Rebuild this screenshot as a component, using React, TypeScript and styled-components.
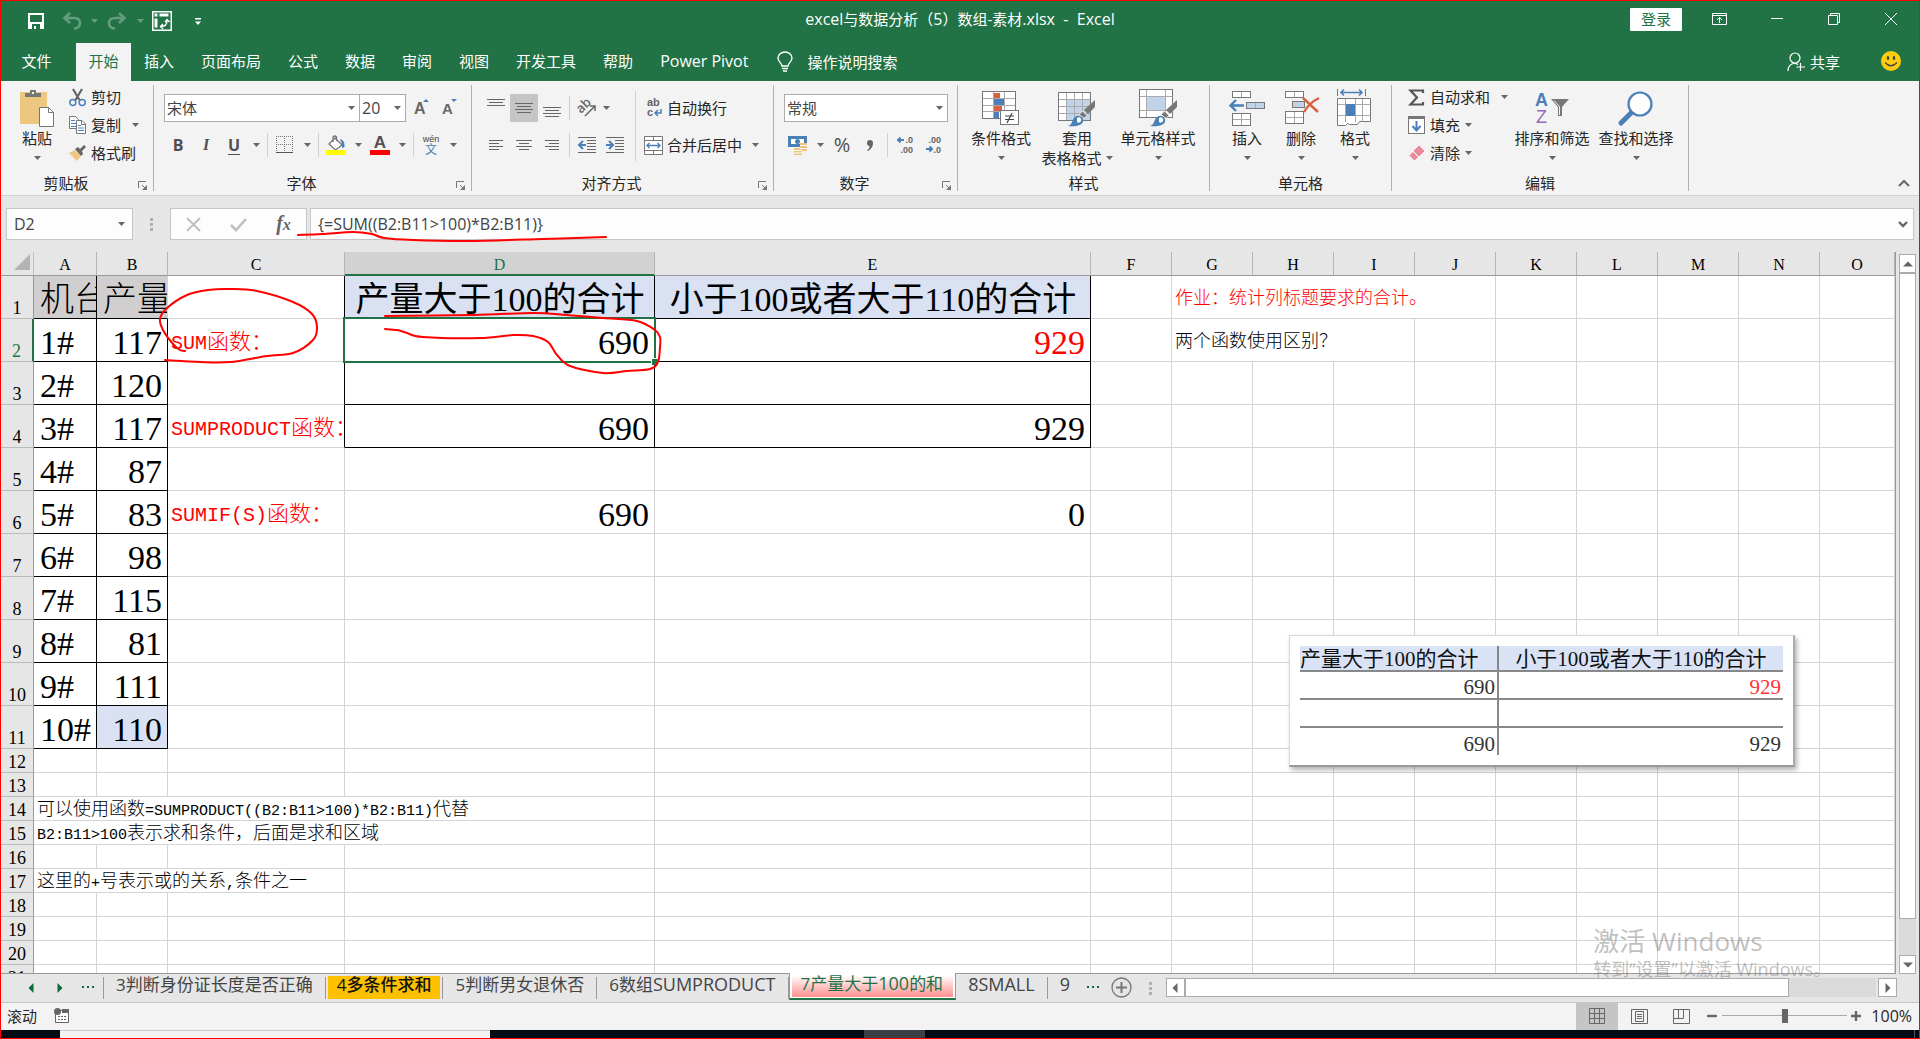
import React from "react";
import styled, { createGlobalStyle, css } from "styled-components";

const GREEN = "#217346";
const UI = `"Open Sans", "Noto Sans CJK SC", sans-serif`;
const SONG = `"Liberation Serif", "Noto Sans CJK SC", serif`;
const GREY = "#666";
const BLUE = "#4a7fb8";

const Global = createGlobalStyle`
  *, *::before, *::after { box-sizing: border-box; }
  body { margin: 0; overflow: hidden; }
  button, input, select { font: inherit; color: inherit; margin: 0; padding: 0; border: 0; background: none; border-radius: 0; }
  button { white-space: nowrap; }
  svg { display: block; flex: none; overflow: visible; }
`;

const Window = styled.div`
  position: relative;
  display: flex;
  flex-direction: column;
  height: 100vh;
  border: 1px solid #f00;
  background: #e6e6e6;
  color: #262626;
  font: 15px/20px ${UI};
  overflow: hidden;
`;

/* ---------- title bar ---------- */
const TitleBar = styled.header`
  display: grid;
  grid-template-columns: 1fr auto 1fr;
  align-items: center;
  height: 42px;
  padding-bottom: 6px;
  background: ${GREEN};
  color: #fff;
`;
const Title = styled.h1`
  margin: 0;
  font-size: 15px;
  font-weight: 400;
  white-space: pre;
`;
/* Latin letters are set one pixel larger than the Chinese around them. */
const Latin = styled.span<{ $s?: number }>`
  font-size: ${(p) => p.$s ?? 16}px;
  line-height: 0;
`;
const QuickBar = styled.div`
  display: flex;
  align-items: center;
  padding: 4px 0 0 21px;
`;
const QuickButton = styled.button<{ $w: number; $dim?: boolean }>`
  display: flex;
  align-items: center;
  justify-content: center;
  width: ${(p) => p.$w}px;
  height: 28px;
  opacity: ${(p) => (p.$dim ? 0.3 : 1)};
`;
const WindowButtons = styled.div`
  display: flex;
  justify-content: flex-end;
  align-items: center;
`;
const SignIn = styled.button`
  width: 52px;
  height: 23px;
  margin-right: 9px;
  border-radius: 1px;
  background: #fff;
  color: ${GREEN};
`;
const WindowButton = styled.button`
  display: flex;
  align-items: center;
  justify-content: center;
  width: 57px;
  height: 36px;
`;

/* ---------- ribbon tabs ---------- */
const Tabs = styled.nav`
  display: flex;
  height: 38px;
  background: ${GREEN};
  color: #fff;
`;
const Tab = styled.button<{ $active?: boolean; $file?: boolean }>`
  padding: 0 14px 3px 13px;
  width: ${(p) => (p.$file ? "75px" : p.$active ? "55px" : "auto")};
  padding-right: ${(p) => (p.$file ? "18px" : p.$active ? "12px" : "14px")};
  padding-left: ${(p) => (p.$file ? "14px" : p.$active ? "12px" : "13px")};
  background: ${(p) => (p.$active ? "#f3f3f3" : "transparent")};
  color: ${(p) => (p.$active ? GREEN : "#fff")};
`;
const TellMe = styled.button`
  display: flex;
  align-items: center;
  gap: 14px;
  padding-left: 15px;
`;
const Share = styled.button`
  display: flex;
  align-items: center;
  gap: 4px;
  margin-left: auto;
`;
const Smile = styled.button`
  display: flex;
  align-items: center;
  padding: 0 18px 2px 41px;
`;

/* ---------- ribbon ---------- */
const Ribbon = styled.section`
  display: flex;
  height: 115px;
  padding: 4px 0;
  background: #f3f3f3;
  border-bottom: 1px solid #d2d2d2;
`;
const Group = styled.section<{ $w: number }>`
  display: flex;
  flex-direction: column;
  flex: 0 0 ${(p) => p.$w}px;
  height: 106px;
  border-right: 1px solid #b1b1b1;
`;
const GroupBody = styled.div<{ $pad?: number }>`
  display: flex;
  flex: 1;
  padding-left: ${(p) => p.$pad ?? 10}px;
`;
const GroupFooter = styled.footer`
  display: flex;
  height: 16px;
  line-height: 16px;
`;
const GroupName = styled.span`
  flex: 1;
  text-align: center;
`;
const Launcher = styled.button`
  display: flex;
  align-items: center;
  width: 22px;
  padding: 5px 0 0 7px;
`;
const BigButton = styled.button<{ $w: number }>`
  display: flex;
  flex-direction: column;
  align-items: center;
  width: ${(p) => p.$w}px;
  padding-top: 3px;
`;
const BigIcon = styled.span`
  display: flex;
  align-items: center;
  height: 40px;
`;
const BigLine = styled.span`
  display: flex;
  align-items: center;
  gap: 4px;
  height: 20px;
`;
const SmallColumn = styled.div<{ $w?: number }>`
  display: flex;
  flex-direction: column;
  width: ${(p) => (p.$w ? `${p.$w}px` : "auto")};
  margin-top: -2px;
  padding-left: 6px;
`;
const SmallButton = styled.button<{ $gap?: number }>`
  display: flex;
  align-items: center;
  gap: 5px;
  height: 28px;
  svg:last-child:not(:first-child) { margin-left: ${(p) => p.$gap ?? 0}px; }
`;
const ToolRows = styled.div`
  display: flex;
  flex: 1;
  flex-direction: column;
  gap: 9px;
  padding-top: 9px;
`;
const ToolRow = styled.div`
  display: flex;
  align-items: center;
  height: 28px;
`;
const Tool = styled.button<{ $w?: number; $on?: boolean }>`
  display: flex;
  align-items: center;
  justify-content: center;
  width: ${(p) => p.$w ?? 28}px;
  height: 28px;
  background: ${(p) => (p.$on ? "#c5c5c5" : "transparent")};
`;
const Glyph = styled.span<{ $italic?: boolean; $line?: boolean; $big?: boolean }>`
  color: #505050;
  font-size: ${(p) => (p.$big ? 20 : 16)}px;
  font-weight: ${(p) => (p.$big ? 400 : 700)};
  ${(p) => p.$italic && css`font-family: "Liberation Serif", serif; font-style: italic;`}
  border-bottom: ${(p) => (p.$line ? "1px solid #505050" : "0")};
  line-height: 18px;
`;
const Rule = styled.i<{ $tall?: boolean }>`
  width: 1px;
  height: ${(p) => (p.$tall ? 70 : 24)}px;
  margin: ${(p) => (p.$tall ? "6px 0 0" : "0 3px 0 3px")};
  background: #d0d0d0;
`;
const WideTool = styled.button`
  display: flex;
  align-items: center;
  gap: 4px;
  height: 28px;
  padding-left: 8px;
  svg:last-child:not(:first-child) { margin-left: 6px; }
`;
const AlignTools = styled(ToolRows)`
  flex: 0 0 153px;
`;
const Combo = styled.label<{ $w: number }>`
  display: grid;
  align-items: center;
  width: ${(p) => p.$w}px;
  height: 28px;
  border: 1px solid #ababab;
  background: #fff;
  color: #444;
  svg { grid-area: 1 / 1; justify-self: end; margin-right: 4px; pointer-events: none; }
  select { grid-area: 1 / 1; appearance: none; width: 100%; height: 26px; padding-left: 2px; outline: 0; }
  & + & { margin: 0 2px 0 -1px; font-size: 16px; }
`;
const Collapse = styled.button`
  align-self: flex-end;
  margin-left: auto;
  padding: 0 9px 4px;
`;

/* ---------- formula bar ---------- */
const FormulaBar = styled.div`
  display: flex;
  align-items: center;
  height: 56px;
  padding: 0 5px;
`;
const Box = styled.div<{ $w?: number }>`
  display: flex;
  align-items: center;
  flex: ${(p) => (p.$w ? `0 0 ${p.$w}px` : "1")};
  min-width: 0;
  height: 32px;
  border: 1px solid #c6c6c6;
  background: #fdfdfd;
  color: #444;
  font-size: 16px;
  input { flex: 1; width: 0; min-width: 0; height: 30px; padding-left: 7px; outline: 0; }
`;
const Grip = styled.span<{ $w: number }>`
  display: flex;
  flex-direction: column;
  align-items: center;
  justify-content: center;
  gap: 2px;
  width: ${(p) => p.$w}px;
  i { width: 3px; height: 3px; background: #b0b0b0; }
`;
const FxButton = styled.button`
  display: flex;
  align-items: center;
  justify-content: center;
  width: 45px;
  height: 30px;
`;
const Fx = styled.span`
  color: #666;
  font: italic 700 20px/24px "Liberation Serif", serif;
  small { font-size: 16px; }
`;
const BoxEnd = styled.button`
  padding: 0 7px;
`;
const FormulaEnd = styled.button`
  padding: 0 5px;
`;

/* ---------- sheet ---------- */
const Main = styled.main`
  display: flex;
  flex: 1;
  min-height: 0;
`;
const SheetView = styled.div`
  position: relative;
  flex: 1;
  min-width: 0;
  overflow: hidden;
  border-bottom: 1px solid #999;
`;
const Sheet = styled.table`
  width: 100%;
  table-layout: fixed;
  border-collapse: separate;
  border-spacing: 0;
  font-family: ${SONG};
  color: #000;
`;
const CornerCell = styled.th`
  height: 24px;
  padding: 0 3px 3px 0;
  border-right: 1px solid #c0c0c0;
  border-bottom: 1px solid #999;
  svg { margin-left: auto; }
`;
const ColumnHead = styled.th<{ $on?: boolean }>`
  height: 24px;
  padding: 3px 0 0;
  border-right: 1px solid #b4b4b4;
  border-bottom: ${(p) => (p.$on ? `2px solid ${GREEN}` : "1px solid #999")};
  background: ${(p) => (p.$on ? "#d2d2d2" : "#e6e6e6")};
  color: ${(p) => (p.$on ? GREEN : "#000")};
  font-size: 16px;
  font-weight: 400;
  line-height: 18px;
`;
const RowHead = styled.th<{ $on?: boolean; $tall?: boolean }>`
  height: ${(p) => (p.$tall ? 43 : 24)}px;
  padding: 0;
  border-right: ${(p) => (p.$on ? `2px solid ${GREEN}` : "1px solid #999")};
  border-bottom: 1px solid #bbb;
  background: #e6e6e6;
  color: ${(p) => (p.$on ? GREEN : "#000")};
  font-size: 18px;
  font-weight: 400;
  line-height: 20px;
  vertical-align: bottom;
`;
type CellProps = {
  $size?: number;
  $align?: string;
  $fill?: string;
  $red?: boolean;
  $blackRight?: boolean;
  $blackBottom?: boolean;
  $head?: boolean;
};
const cellPadding = (size = 18) => (size === 34 ? "6px 5px 0 6px" : size === 22 ? "5px 3px 0" : "1px 3px 0");
const Cell = styled.td<CellProps>`
  position: relative;
  padding: ${(p) => cellPadding(p.$size)};
  border-right: 1px solid ${(p) => (p.$blackRight ? "#000" : "#d4d4d4")};
  border-bottom: 1px solid ${(p) => (p.$blackBottom ? "#000" : "#d4d4d4")};
  background: ${(p) => p.$fill ?? "#fff"};
  color: ${(p) => (p.$red ? "#f00" : "#000")};
  font-size: ${(p) => p.$size ?? 18}px;
  font-weight: ${(p) => (p.$head ? 400 : 300)};
  line-height: 22px;
  text-align: ${(p) => p.$align ?? "left"};
  white-space: nowrap;
  overflow: clip;
`;
const SelectedCell = styled(Cell)`
  overflow: visible;
`;
const Half = styled.span<{ $s: number }>`
  font-family: "Liberation Mono", monospace;
  font-size: ${(p) => p.$s}px;
  line-height: 1;
`;
const Selection = styled.i`
  position: absolute;
  inset: -2px;
  z-index: 1;
  border: 2px solid ${GREEN};
  &::after {
    content: "";
    position: absolute;
    right: -4px;
    bottom: -4px;
    width: 7px;
    height: 7px;
    border: solid #fff;
    border-width: 1px 0 0 1px;
    background: ${GREEN};
  }
`;
const Picture = styled.figure`
  position: absolute;
  left: 1288px;
  top: 383px;
  width: 506px;
  margin: 0;
  padding: 10px;
  border: 1px solid #d8d8d8;
  border-right: 2px solid #aaa;
  border-bottom: 2px solid #999;
  background: #fff;
  box-shadow: 2px 3px 5px rgba(0, 0, 0, 0.3);
`;
const PictureTable = styled.table`
  width: 100%;
  table-layout: fixed;
  border-collapse: collapse;
  color: #333;
  font: 21px/22px ${SONG};
  th { height: 25px; padding: 1px 0 0; background: #dae3f5; color: #111; font-weight: 400; white-space: nowrap; }
  th:first-child { text-align: left; }
  td { height: 28px; padding: 4px 2px 0; text-align: right; }
  th, tr:not(:last-child) td { border-bottom: 2px solid #888; }
  tr > :first-child { border-right: 2px solid #888; }
  .warn { color: #f33; }
`;
const VScroll = styled.div`
  display: flex;
  flex-direction: column;
  width: 24px;
  padding: 2px 3px 0 3px;
  border-left: 1px solid #999;
`;
const ScrollButton = styled.button`
  display: flex;
  align-items: center;
  justify-content: center;
  flex: 0 0 19px;
  height: 19px;
  border: 1px solid #ababab;
  background: #fff;
`;
const VTrack = styled.div`
  flex: 1;
  padding-bottom: 36px;
  background: #dadada;
`;
const Thumb = styled.div`
  height: 100%;
  border: 1px solid #ababab;
  background: #fff;
`;

/* ---------- sheet tabs ---------- */
const SheetBar = styled.div`
  display: flex;
  height: 29px;
  padding-left: 15px;
  border-bottom: 1px solid #c6c6c6;
`;
const TabArrow = styled.button<{ $w: number }>`
  display: flex;
  align-items: center;
  justify-content: center;
  width: ${(p) => p.$w}px;
  height: 27px;
`;
const SheetTab = styled.button<{ $first?: boolean; $last?: boolean }>`
  height: 22px;
  margin-top: 3px;
  padding: 0 ${(p) => (p.$last ? 10 : 12)}px 6px 12px;
  border-right: ${(p) => (p.$last ? "0" : "1px solid #999")};
  border-left: ${(p) => (p.$first ? "1px solid #999" : "0")};
  color: #444;
  font-size: 17px;
  line-height: 16px;
`;
const OrangeTab = styled.button`
  height: 23px;
  margin: 2px 2px 0;
  padding: 0 9px 6px;
  background: #ffc000;
  color: #111;
  font-size: 17px;
  font-weight: 500;
  line-height: 16px;
`;
const TabRule = styled.i`
  width: 1px;
  height: 22px;
  margin-top: 3px;
  background: #999;
`;
const ActiveTab = styled.button`
  position: relative;
  z-index: 1;
  height: 27px;
  margin-top: -1px;
  padding: 0 2px 1px;
  border: solid #999;
  border-width: 0 1px;
  border-bottom: 2px solid ${GREEN};
  background: #fff;
  color: ${GREEN};
  font-size: 17px;
  line-height: 16px;
`;
const ActiveFill = styled.span`
  display: block;
  height: 24px;
  padding: 3px 10px 3px 9px;
  background: linear-gradient(#fff 10%, #ff8f8f);
`;
const HScroll = styled.div`
  display: flex;
  flex: 1;
  height: 19px;
  margin: 4px 22px 0 0;
`;
const HTrack = styled.div`
  flex: 1;
  margin-right: 2px;
  padding-right: 87px;
  background: #dadada;
`;

/* ---------- status bar ---------- */
const StatusBar = styled.footer`
  display: flex;
  align-items: center;
  height: 27px;
  padding: 0 7px 2px 6px;
  background: #f3f3f3;
`;
const ViewButtons = styled.div`
  display: flex;
  height: 25px;
  margin: 0 4px 0 auto;
`;
const ViewButton = styled.button<{ $on?: boolean }>`
  display: flex;
  align-items: center;
  justify-content: center;
  width: 42px;
  height: 27px;
  background: ${(p) => (p.$on ? "#c5c5c5" : "transparent")};
`;
const ZoomSlider = styled.input`
  appearance: none;
  width: 125px;
  height: 14px;
  margin: 0 4px;
  background: linear-gradient(#aaa, #aaa) center / 100% 1px no-repeat;
  &::-webkit-slider-thumb { appearance: none; width: 6px; height: 14px; background: #666; }
`;
const Percent = styled.span`
  margin-left: 10px;
  font-size: 16px;
`;
const Taskbar = styled.div`
  display: flex;
  height: 8px;
  background: #050b13;
  i { height: 8px; }
  i:nth-child(1) { width: 59px; }
  i:nth-child(2) { width: 430px; background: #f3f3f3; border-top: 1px solid #ccc; }
  i:nth-child(3) { width: 374px; }
  i:nth-child(4) { width: 61px; background: #3a3f46; }
  i:nth-child(5) { width: 1px; margin: 0 4px 0 auto; background: #555; }
`;
const Watermark = styled.aside`
  position: absolute;
  right: 88px;
  bottom: 58px;
  color: rgba(130, 130, 130, 0.5);
  font-size: 18px;
  line-height: 22px;
  white-space: nowrap;
  pointer-events: none;
  strong { display: block; font-size: 26px; font-weight: 400; line-height: 34px; }
`;
const Ink = styled.svg`
  position: absolute;
  left: -1px;
  top: -1px;
  z-index: 2;
  pointer-events: none;
`;

/* ---------- small icons ---------- */
const Caret = ({ fill = GREY }: { fill?: string }) => (
  <svg width="7" height="4" viewBox="0 0 7 4"><path d="M0 0h7L3.5 4z" fill={fill} /></svg>
);
const Lines = ({ rows, y }: { rows: [number, number][]; y: number }) => (
  <svg width="20" height="20" viewBox="0 0 20 20">
    {rows.map(([x, w], i) => <rect key={i} x={x} y={y + i * 3} width={w} height="1" fill={GREY} />)}
  </svg>
);
const wide: [number, number][] = [[1, 18], [3, 14], [1, 18], [3, 14]];
const UndoIcon = () => (
  <svg width="20" height="18" viewBox="0 0 20 18" fill="none" stroke="#fff" strokeWidth="2.6">
    <path d="M8 1L2.5 6 8 11M3 6h9c4 0 6 2 6 5s-2 5.500-6 5.500" />
  </svg>
);
const Grid = ({ x, y, w, h, nx, ny }: { x: number; y: number; w: number; h: number; nx: number; ny: number }) => (
  <g>
    <g stroke="#aaa" strokeWidth="1">
      {Array.from({ length: nx - 1 }, (_, i) => <path key={`v${i}`} d={`M${x + Math.round((w / nx) * (i + 1))} ${y}v${h}`} />)}
      {Array.from({ length: ny - 1 }, (_, i) => <path key={`h${i}`} d={`M${x} ${y + Math.round((h / ny) * (i + 1))}h${w}`} />)}
    </g>
    <rect x={x} y={y} width={w} height={h} fill="none" stroke="#777" />
  </g>
);
const Brush = ({ x, y }: { x: number; y: number }) => (
  <g transform={`translate(${x} ${y})`}>
    <path d="M27 0v7l-7 7-4-4z" fill="#777" />
    <path d="M14.500 11l4.500 4.500-3 3-5-4z" fill="#777" stroke="#f3f3f3" />
    <path d="M0 26c5-1 4-9 9-10 4-1 7 3 6 6-2 4-9 5-15 4z" fill={BLUE} />
    <path d="M9 18c2-2 5 0 4 3-1 2-3 2-4 1z" fill="#fff" />
  </g>
);
const PasteIcon = () => (
  <svg width="36" height="38" viewBox="0 0 36 38">
    <rect x="1" y="3" width="27" height="32" fill="#edc77f" />
    <path d="M6 8V4h5V1h6v3h5v4z" fill="#777" /><rect x="13" y="3" width="2" height="2" fill="#f3f3f3" />
    <path d="M20.500 18.500h9l5 5v14h-14z" fill="#fff" stroke="#777" /><path d="M29.500 18.500v5h5" fill="none" stroke="#777" />
  </svg>
);
const CutIcon = () => (
  <svg width="17" height="19" viewBox="0 0 17 19" fill="none">
    <path d="M4 1l6.500 11M13 1L6.500 12" stroke="#666" strokeWidth="2.200" />
    <circle cx="3.800" cy="14.500" r="3" stroke={BLUE} strokeWidth="1.500" /><circle cx="13.200" cy="14.500" r="3" stroke={BLUE} strokeWidth="1.500" />
  </svg>
);
const CopyIcon = () => (
  <svg width="17" height="18" viewBox="0 0 17 18">
    <path d="M.5.500h6l3 3v9h-9z" fill="#fff" stroke="#777" /><path d="M2 4.500h4M2 7.500h5M2 10.500h5" stroke={BLUE} />
    <path d="M7.500 4.500h5.500l3.500 3.500v9.500h-9z" fill="#fff" stroke="#777" /><path d="M12.500 4.500v4h4" fill="none" stroke="#777" /><path d="M9 9.500h3M9 12h6M9 14.500h6" stroke={BLUE} />
  </svg>
);
const PainterIcon = () => (
  <svg width="17" height="16" viewBox="0 0 17 16">
    <path d="M0 8l6-3 6 6-4 5z" fill="#edc77f" /><path d="M6 4l3-2 2 2 4-4 2 2-4 4 1 3-2 2z" fill="#666" />
  </svg>
);
const BordersIcon = () => (
  <svg width="18" height="18" viewBox="0 0 18 18" fill="none" stroke="#777">
    <path d="M.5 0v16M8.500 0v16M16.500 0v16M0 .5h17M0 8.500h17" strokeDasharray="1 1" /><path d="M0 16.500h17" stroke="#555" />
  </svg>
);
const FillIcon = () => (
  <svg width="20" height="20" viewBox="0 0 20 20">
    <path d="M9 3l7 7-6.500 5L3 9z" fill="#fff" stroke="#777" strokeWidth="1.300" /><path d="M7 7V2q2-2 3.500 0v4" fill="none" stroke="#777" strokeWidth="1.300" />
    <path d="M14 4q5 1 4.500 8l-2.500 1V9z" fill={BLUE} /><rect y="15" width="20" height="5" fill="#ff0" />
  </svg>
);
const svgFont = { fontFamily: `"Open Sans", "Noto Sans CJK SC", sans-serif` };
const tightFont = { fontFamily: `"Liberation Sans", sans-serif` };
const FontColorIcon = () => (
  <svg width="20" height="20" viewBox="0 0 20 20">
    <text x="10" y="13" textAnchor="middle" fontSize="17" fontWeight="700" fill="#505050" style={tightFont}>A</text>
    <rect y="15" width="20" height="5" fill="#f00" />
  </svg>
);
const PhoneticIcon = () => (
  <svg width="18" height="20" viewBox="0 0 18 20">
    <text x="9" y="7" textAnchor="middle" fontSize="9" fill="#444" style={tightFont}>wén</text>
    <text x="9" y="19" textAnchor="middle" fontSize="12" fill={BLUE} style={svgFont}>文</text>
  </svg>
);
const SizeIcon = ({ up }: { up?: boolean }) => (
  <svg width="18" height="20" viewBox="0 0 18 20" style={tightFont}>
    <text x="1" y="16" fontSize={up ? 16 : 15} fontWeight="600" fill="#666">A</text>
    <path d={up ? "M10 4h6l-3-3z" : "M10 1h6l-3 3z"} fill={BLUE} />
  </svg>
);
const AngleIcon = () => (
  <svg width="20" height="20" viewBox="0 0 20 20" style={svgFont}>
    <text x="0" y="0" transform="translate(4 16) rotate(-45)" fontSize="13" fontWeight="600" fill="#666">ab</text>
    <path d="M8 18L18 8M13 8h5v5" fill="none" stroke="#666" strokeWidth="1.500" />
  </svg>
);
const IndentIcon = ({ out }: { out?: boolean }) => (
  <svg width="20" height="18" viewBox="0 0 20 18">
    <path d="M1 1.500h18M10 4.500h9M10 7.500h9M10 10.500h9M10 13.500h9M1 16.500h18" stroke={GREY} />
    <path d={out ? "M9 9H3M6 5L2 9l4 4" : "M1 9h6M4 5l4 4-4 4"} fill="none" stroke={BLUE} strokeWidth="2" />
  </svg>
);
const WrapIcon = () => (
  <svg width="19" height="20" viewBox="0 0 19 20" style={tightFont}>
    <text x="3" y="8" fontSize="11" fontWeight="700" fill="#666">ab</text>
    <text x="3" y="18" fontSize="11" fontWeight="700" fill="#666">c</text>
    <path d="M17 11v4h-6M14 12l-3 3 3 3" fill="none" stroke={BLUE} strokeWidth="1.500" />
  </svg>
);
const MergeIcon = () => (
  <svg width="19" height="19" viewBox="0 0 19 19" fill="none">
    <path d="M.5.500h18v18H.5zM.5 4.500h18M.5 14.500h18M9.500.500v4M9.500 14.500v4" fill="#fff" stroke="#777" />
    <path d="M3 9.500h13M5.500 7L3 9.500 5.500 12M13.500 7L16 9.500 13.500 12" stroke={BLUE} strokeWidth="1.400" />
  </svg>
);
const MoneyIcon = () => (
  <svg width="20" height="20" viewBox="0 0 20 20">
    <rect x="1.500" y="2.500" width="16" height="8" fill="#fff" stroke={BLUE} strokeWidth="3" /><circle cx="9.500" cy="6.500" r="2.500" fill={BLUE} />
    <path d="M12 8h7v8h-7zM6 13h8v7H6z" fill="#edc27d" /><path d="M12 10.500h7M12 13.500h7M6 15.500h8M6 18h8" stroke="#fff" />
  </svg>
);
const DecimalIcon = ({ more }: { more?: boolean }) => (
  <svg width="20" height="20" viewBox="0 0 20 20" style={tightFont}>
    <text x="18" y="8" textAnchor="end" fontSize="9" fontWeight="700" fill="#666">{more ? ".0" : ".00"}</text>
    <text x="18" y="18" textAnchor="end" fontSize="9" fontWeight="700" fill="#666">{more ? ".00" : ".0"}</text>
    <path d={more ? "M9 5H3M5.500 2.500L3 5l2.500 2.500" : "M3 14h6M6.500 11.500L9 14l-2.500 2.500"} fill="none" stroke={BLUE} strokeWidth="2" />
  </svg>
);
const ConditionalIcon = () => (
  <svg width="38" height="36" viewBox="0 0 38 36">
    <rect x="1" y="2" width="33" height="27" fill="#fff" />
    <path d="M11 3h7v6h-7zM11 16h9v6h-9z" fill="#d9603f" /><path d="M11 9h11v7H11zM11 22h6v7h-6z" fill={BLUE} />
    <Grid x={0.5} y={1.5} w={33} h={27} nx={3} ny={4} />
    <rect x="18.500" y="20.500" width="18" height="14" fill="#fff" stroke="#777" />
    <path d="M23 26h9M23 29.500h9M30 23l-5 10" stroke="#444" strokeWidth="1.200" />
  </svg>
);
const TableStyleIcon = () => (
  <svg width="38" height="38" viewBox="0 0 38 38">
    <rect x="1" y="4" width="32" height="27" fill="#fff" /><rect x="9" y="11" width="24" height="20" fill="#c0d3e8" />
    <Grid x={0.5} y={3.5} w={32} h={28} nx={4} ny={4} /><Brush x={10} y={11} />
  </svg>
);
const CellStyleIcon = () => (
  <svg width="38" height="38" viewBox="0 0 38 38">
    <rect x=".5" y=".5" width="33" height="28" fill="#fff" stroke="#777" />
    <path d="M7.500 1v27M26.500 1v27M1 7.500h32M1 21.500h32" stroke="#aaa" /><rect x="8" y="8" width="18" height="13" fill="#c0d3e8" />
    <Brush x={11} y={11} />
  </svg>
);
const SmallGrid = ({ y, h, ny }: { y: number; h: number; ny: number }) => (
  <g><rect x="3.500" y={y} width="18" height={h} fill="#fff" /><Grid x={3.5} y={y} w={18} h={h} nx={2} ny={ny} /></g>
);
const InsertIcon = () => (
  <svg width="36" height="36" viewBox="0 0 36 36">
    <SmallGrid y={1.5} h={6} ny={1} /><SmallGrid y={23.5} h={12} ny={2} />
    <rect x="17.500" y="12.500" width="18" height="6" fill="#c0d3e8" /><Grid x={17.5} y={12.5} w={18} h={6} nx={2} ny={1} />
    <path d="M15 15.500H2M7 10l-5.500 5.500L7 21" fill="none" stroke={BLUE} strokeWidth="2.400" />
  </svg>
);
const DeleteIcon = () => (
  <svg width="38" height="36" viewBox="0 0 38 36">
    <SmallGrid y={1.5} h={6} ny={1} /><SmallGrid y={21.5} h={12} ny={2} />
    <rect x="10.500" y="11.500" width="12" height="6" fill="#c0d3e8" stroke="#777" />
    <path d="M21 8l15 14M37 8Q27 13 22 22" fill="none" stroke="#d9603f" strokeWidth="2.400" />
  </svg>
);
const FormatIcon = () => (
  <svg width="36" height="38" viewBox="0 0 36 38">
    <path d="M.5 0v7M28.500 0v7" stroke={BLUE} /><path d="M4 3.500h21M7 .5l-3 3 3 3M22 .5l3 3-3 3" fill="none" stroke={BLUE} strokeWidth="1.600" />
    <path d="M.5 9.500h33v23h-11l-2 3h-8l-2-1-2 2h-8z" fill="#fff" stroke="#777" />
    <path d="M8.500 10v23M18.500 10v23M25.500 10v23M1 15.500h32M1 26.500h32" stroke="#aaa" /><rect x="9" y="15" width="9" height="12" fill={BLUE} />
  </svg>
);
const SumIcon = () => (
  <svg width="17" height="17" viewBox="0 0 17 17"><path d="M15 4V1.500H2.500L9 8.500l-6.500 7H15V13" fill="none" stroke="#555" strokeWidth="2.200" /></svg>
);
const FillDownIcon = () => (
  <svg width="17" height="18" viewBox="0 0 17 18">
    <rect x=".5" y=".5" width="16" height="17" fill="#fff" stroke="#777" /><rect width="17" height="3" fill="#777" />
    <path d="M8.500 5v9M4.500 10l4 4.500 4-4.500" fill="none" stroke={BLUE} strokeWidth="2" />
  </svg>
);
const EraserIcon = () => (
  <svg width="17" height="17" viewBox="0 0 17 17"><path d="M11 1l5 5-5 5-5-5z" fill="#e8899c" stroke="#e8899c" strokeLinejoin="round" /><path d="M5 7l5 5-3.500 3.500-5-5z" fill="#e8899c" /></svg>
);
const SortIcon = () => (
  <svg width="36" height="36" viewBox="0 0 36 36" style={tightFont}>
    <text x="1" y="16" fontSize="18" fontWeight="700" fill={BLUE}>A</text><text x="2" y="33" fontSize="18" fontWeight="400" fill="#9668b8">Z</text>
    <path d="M17 9h18l-7 8v9h-4v-9z" fill="#777" /><path d="M20 10.500l5.500 6V25" fill="none" stroke="#f3f3f3" />
  </svg>
);
const FindIcon = () => (
  <svg width="36" height="36" viewBox="0 0 36 36">
    <path d="M14 22L3 33" stroke={BLUE} strokeWidth="5" strokeLinecap="round" /><circle cx="22" cy="14" r="11.500" fill="#fff" stroke={BLUE} strokeWidth="2.200" />
  </svg>
);
const Arrow = ({ d, fill = GREY }: { d: string; fill?: string }) => <svg width="10" height="10" viewBox="0 0 10 10"><path d={d} fill={fill} /></svg>;
const Ellipsis = () => (
  <svg width="13" height="3" viewBox="0 0 13 3"><path d="M0 0h2v2H0zM5 0h2v2H5zM10 0h2v2h-2z" fill="#0b6b3a" /></svg>
);
const LEFT = "M7.500 0v10l-5-5z";
const RIGHT = "M2.500 0v10l5-5z";

const Big = ({ w, icon, label, second }: { w: number; icon: React.ReactNode; label: string; second?: string }) => (
  <BigButton $w={w}>
    <BigIcon>{icon}</BigIcon>
    <BigLine>{label}</BigLine>
    <BigLine>{second}<Caret /></BigLine>
  </BigButton>
);
const RibbonGroup = ({ w, pad, name, launcher, children }: { w: number; pad?: number; name: string; launcher?: boolean; children: React.ReactNode }) => (
  <Group $w={w}>
    <GroupBody $pad={pad}>{children}</GroupBody>
    <GroupFooter>
      <GroupName>{name}</GroupName>
      {launcher && (
        <Launcher aria-label={`${name}设置`}>
          <svg width="10" height="10" viewBox="0 0 10 10"><path d="M.5 7V.5H8M4 4l4 4" fill="none" stroke="#777" /><path d="M9 4v5H4z" fill="#777" /></svg>
        </Launcher>
      )}
    </GroupFooter>
  </Group>
);
const Dropdown = ({ w, label, value }: { w: number; label: string; value: string }) => (
  <Combo $w={w}><select aria-label={label} defaultValue={value}><option>{value}</option></select><Caret /></Combo>
);

/* ---------- sheet contents ---------- */
const letters = ["A", "B", "C", "D", "E", "F", "G", "H", "I", "J", "K", "L", "M", "N", "O"];
const widths = [63, 71, 177, 310, 436, 81, 81, 81, 81, 81, 81, 81, 81, 81];
const output = ["117", "120", "117", "87", "83", "98", "115", "81", "111", "110"];
type Content = CellProps & { text: React.ReactNode; span?: number };
const red = (latin: string): Content => ({ text: <><Half $s={20}>{latin}</Half>函数：</>, $size: 22, $red: true });
const right = (text: string, isRed = false): Content => ({ text, $size: 34, $align: "right", $red: isRed });

const cells: Record<string, Content> = {
  A1: { text: "机台", $size: 34, $fill: "#d0cece" },
  B1: { text: "产量", $size: 34, $fill: "#d0cece" },
  D1: { text: "产量大于100的合计", $size: 34, $align: "center", $fill: "#d9e1f2", $head: true },
  E1: { text: "小于100或者大于110的合计", $size: 34, $align: "center", $fill: "#d9e1f2", $head: true },
  G1: { text: "作业：统计列标题要求的合计。", $red: true, span: 4 },
  G2: { text: "两个函数使用区别？", span: 3 },
  C2: red("SUM"), C4: red("SUMPRODUCT"), C6: red("SUMIF(S)"),
  D2: right("690"), E2: right("929", true), D4: right("690"), E4: right("929"), D6: right("690"), E6: right("0"),
  A14: { text: <>可以使用函数<Half $s={15}>=SUMPRODUCT((B2:B11&gt;100)*B2:B11)</Half>代替</>, span: 4 },
  A15: { text: <><Half $s={15}>B2:B11&gt;100</Half>表示求和条件，后面是求和区域</>, span: 4 },
  A17: { text: <>这里的<Half $s={15}>+</Half>号表示或的关系<Half $s={15}>,</Half>条件之一</>, span: 3 },
};
output.forEach((v, i) => {
  cells[`A${i + 2}`] = { text: `${i + 1}#`, $size: 34 };
  cells[`B${i + 2}`] = { ...right(v), $fill: i === 9 ? "#d9e1f2" : undefined };
});

const SheetRow = ({ n }: { n: number }) => {
  const items: React.ReactNode[] = [];
  for (let c = 0; c < letters.length; c++) {
    const key = `${letters[c]}${n}`;
    const { text, span = 1, ...look } = cells[key] ?? { text: null };
    const blackBottom = (c < 2 && n <= 11) || (c >= 3 && c <= 4 && n <= 4);
    const blackRight = (c === 0 && n <= 11) || (c === 1 && n > 1 && n <= 11) || (c >= 2 && c <= 4 && n <= 4);
    const Kind = key === "D2" ? SelectedCell : Cell;
    items.push(
      <Kind key={key} colSpan={span} {...look} $blackRight={blackRight} $blackBottom={blackBottom}>
        {text}{key === "D2" && <Selection />}
      </Kind>
    );
    c += span - 1;
  }
  return <tr><RowHead scope="row" $on={n === 2} $tall={n <= 11}>{n}</RowHead>{items}</tr>;
};

/* Smooth pen stroke through a list of points. */
const stroke = (pts: number[][]) =>
  pts.slice(0, -1).reduce((d, p1, i) => {
    const p0 = pts[i - 1] ?? p1, p2 = pts[i + 1], p3 = pts[i + 2] ?? p2;
    return `${d}C${p1[0] + (p2[0] - p0[0]) / 6} ${p1[1] + (p2[1] - p0[1]) / 6} ${p2[0] - (p3[0] - p1[0]) / 6} ${p2[1] - (p3[1] - p1[1]) / 6} ${p2[0]} ${p2[1]}`;
  }, `M${pts[0][0]} ${pts[0][1]}`);
const inkStrokes = [
  [[298, 235], [322, 234], [353, 232], [372, 234], [384, 238], [413, 240], [467, 241], [543, 239], [606, 237]],
  [[185, 351], [180, 350], [173, 344], [163, 330], [160, 319], [167, 308], [187, 295], [208, 290], [230, 289], [257, 291], [293, 302], [312, 314], [317, 327], [313, 340], [293, 353], [267, 356], [230, 362], [200, 362], [165, 360]],
  [[385, 316], [473, 315], [533, 313], [567, 315], [603, 318], [637, 321], [655, 330], [660, 337], [660, 347], [658, 362], [650, 369], [627, 371], [603, 373], [570, 366], [557, 355], [548, 342], [533, 336], [513, 335], [480, 338], [423, 337], [407, 333], [397, 330], [385, 329]],
];

export default function App() {
  return (
    <Window>
      <Global />
      <TitleBar>
        <QuickBar>
          <QuickButton $w={28} aria-label="保存"><svg width="16" height="16" viewBox="0 0 16 16"><path d="M0 0h16v16H0zM2 2v7h12V2zM4 11v5h2v-3h2v3h4v-5z" fill="#fff" fillRule="evenodd" /></svg></QuickButton>
          <QuickButton $w={44} $dim aria-label="撤消"><UndoIcon /></QuickButton>
          <QuickButton $w={0} $dim aria-label="撤消列表"><Caret fill="#fff" /></QuickButton>
          <QuickButton $w={46} $dim aria-label="恢复"><svg width="20" height="18" viewBox="0 0 20 18" fill="none" stroke="#fff" strokeWidth="2.600"><path d="M12 1l5.500 5-5.500 5M17 6H8c-4 0-6 2-6 5s2 5.500 6 5.500" /></svg></QuickButton>
          <QuickButton $w={0} $dim aria-label="恢复列表"><Caret fill="#fff" /></QuickButton>
          <QuickButton $w={44} aria-label="数据透视表"><svg width="20" height="20" viewBox="0 0 20 20" fill="none" stroke="#fff"><path d="M.75.750h18.500v18.500H.750z" strokeWidth="1.500" /><path d="M2.500 2.500h3v3h-3zM7.500 2.500h9v3h-9zM2.500 7.500h3v9h-3z" fill="#fff" stroke="none" /><path d="M9 15.500c4 0 6-2 6-6M13 11l2-2.500 2.500 2.500M11 13l-2.500 2.500L11 18" strokeWidth="1.400" /></svg></QuickButton>
          <QuickButton $w={28} aria-label="自定义快速访问工具栏"><svg width="6" height="7" viewBox="0 0 6 7"><path d="M0 0h6v1.500H0zM0 3.500h6L3 7z" fill="#fff" /></svg></QuickButton>
        </QuickBar>
        <Title><Latin>excel</Latin>与数据分析（<Latin>5</Latin>）数组-素材<Latin>.xlsx  -  Excel</Latin></Title>
        <WindowButtons>
          <SignIn>登录</SignIn>
          <WindowButton aria-label="功能区显示选项"><svg width="15" height="12" viewBox="0 0 15 12" fill="none" stroke="#fff"><path d="M.5.500h14v11H.5zM0 2.500h15M7.500 10V4.500M5 7l2.500-2.500L10 7" /></svg></WindowButton>
          <WindowButton aria-label="最小化"><svg width="12" height="12" viewBox="0 0 12 12"><path d="M0 5.500h12" stroke="#fff" /></svg></WindowButton>
          <WindowButton aria-label="还原"><svg width="12" height="12" viewBox="0 0 12 12" fill="none" stroke="#fff"><path d="M.5 2.500h9v9h-9zM2.500 2.500v-2h9v9h-2" /></svg></WindowButton>
          <WindowButton aria-label="关闭"><svg width="12" height="12" viewBox="0 0 12 12"><path d="M0 0l12 12M12 0L0 12" stroke="#fff" /></svg></WindowButton>
        </WindowButtons>
      </TitleBar>

      <Tabs>
        <Tab $file>文件</Tab>
        <Tab $active>开始</Tab>
        {["插入", "页面布局", "公式", "数据", "审阅", "视图", "开发工具", "帮助"].map((t) => <Tab key={t}>{t}</Tab>)}
        <Tab><Latin>Power Pivot</Latin></Tab>
        <TellMe>
          <svg width="16" height="20" viewBox="0 0 16 20" fill="none" stroke="#fff" strokeWidth="1.400"><path d="M5 14c0-3-4-4-4-8a7 6 0 0 1 14 0c0 4-4 5-4 8zM5 16.500h6M6 19h4" /></svg>
          操作说明搜索
        </TellMe>
        <Share>
          <svg width="19" height="20" viewBox="0 0 19 20" fill="none" stroke="#fff" strokeWidth="1.200"><circle cx="8" cy="6" r="5" /><path d="M1 19c0-5 3-7.500 6-7.500 2 0 3 0 4 1M13.500 11v8M9.500 15h8.500" /></svg>
          共享
        </Share>
        <Smile aria-label="反馈"><svg width="20" height="20" viewBox="0 0 20 20"><circle cx="10" cy="10" r="10" fill="#fc1" /><ellipse cx="7" cy="7" rx="1.300" ry="2" fill="#444" /><ellipse cx="13" cy="7" rx="1.300" ry="2" fill="#444" /><path d="M4 11.500q6 6.500 12 0" fill="none" stroke="#444" strokeWidth="1.300" /></svg></Smile>
      </Tabs>

      <Ribbon>
        <RibbonGroup w={153} pad={10} name="剪贴板" launcher>
          <Big w={52} icon={<PasteIcon />} label="粘贴" />
          <SmallColumn>
            <SmallButton><CutIcon />剪切</SmallButton>
            <SmallButton $gap={6}><CopyIcon />复制<Caret /></SmallButton>
            <SmallButton><PainterIcon />格式刷</SmallButton>
          </SmallColumn>
        </RibbonGroup>

        <RibbonGroup w={318} name="字体" launcher>
          <ToolRows>
            <ToolRow>
              <Dropdown w={196} label="字体" value="宋体" />
              <Dropdown w={47} label="字号" value="20" />
              <Tool aria-label="增大字号"><SizeIcon up /></Tool>
              <Tool aria-label="减小字号"><SizeIcon /></Tool>
            </ToolRow>
            <ToolRow>
              <Tool aria-label="加粗"><Glyph>B</Glyph></Tool>
              <Tool aria-label="倾斜"><Glyph $italic>I</Glyph></Tool>
              <Tool aria-label="下划线"><Glyph $line>U</Glyph></Tool>
              <Tool $w={16} aria-label="下划线样式"><Caret /></Tool>
              <Rule />
              <Tool aria-label="边框"><BordersIcon /></Tool>
              <Tool $w={16} aria-label="边框样式"><Caret /></Tool>
              <Rule />
              <Tool aria-label="填充颜色"><FillIcon /></Tool>
              <Tool $w={16} aria-label="选择填充颜色"><Caret /></Tool>
              <Tool aria-label="字体颜色"><FontColorIcon /></Tool>
              <Tool $w={16} aria-label="选择字体颜色"><Caret /></Tool>
              <Rule />
              <Tool aria-label="拼音"><PhoneticIcon /></Tool>
              <Tool $w={16} aria-label="拼音选项"><Caret /></Tool>
            </ToolRow>
          </ToolRows>
        </RibbonGroup>

        <RibbonGroup w={302} name="对齐方式" launcher>
          <AlignTools>
            <ToolRow>
              <Tool aria-label="顶端对齐"><Lines rows={wide.slice(0, 3)} y={1} /></Tool>
              <Tool $on aria-label="垂直居中"><Lines rows={wide} y={5} /></Tool>
              <Tool aria-label="底端对齐"><Lines rows={wide} y={9} /></Tool>
              <Rule />
              <Tool aria-label="方向"><AngleIcon /></Tool>
              <Tool $w={10} aria-label="方向选项"><Caret /></Tool>
            </ToolRow>
            <ToolRow>
              <Tool aria-label="左对齐"><Lines rows={[[3, 14], [3, 10], [3, 14], [3, 10]]} y={5} /></Tool>
              <Tool aria-label="居中"><Lines rows={[[2, 16], [5, 10], [2, 16], [5, 10]]} y={5} /></Tool>
              <Tool aria-label="右对齐"><Lines rows={[[3, 14], [7, 10], [3, 14], [7, 10]]} y={5} /></Tool>
              <Rule />
              <Tool aria-label="减少缩进量"><IndentIcon out /></Tool>
              <Tool aria-label="增加缩进量"><IndentIcon /></Tool>
            </ToolRow>
          </AlignTools>
          <Rule $tall />
          <ToolRows>
            <WideTool><WrapIcon />自动换行</WideTool>
            <WideTool><MergeIcon />合并后居中<Caret /></WideTool>
          </ToolRows>
        </RibbonGroup>

        <RibbonGroup w={184} name="数字" launcher>
          <ToolRows>
            <ToolRow><Dropdown w={164} label="数字格式" value="常规" /></ToolRow>
            <ToolRow>
              <Tool aria-label="会计数字格式"><MoneyIcon /></Tool>
              <Tool $w={16} aria-label="会计格式选项"><Caret /></Tool>
              <Tool aria-label="百分比样式"><Glyph $big>%</Glyph></Tool>
              <Tool aria-label="千位分隔样式"><svg width="8" height="11" viewBox="0 0 8 11"><path d="M1 3a3 3 0 0 1 6 0c0 4-2 6-5 8l-1-1c2-1 2.500-2 2.500-4C2 6 1 5 1 3z" fill="#666" /></svg></Tool>
              <Rule />
              <Tool aria-label="增加小数位数"><DecimalIcon more /></Tool>
              <Tool aria-label="减少小数位数"><DecimalIcon /></Tool>
            </ToolRow>
          </ToolRows>
        </RibbonGroup>

        <RibbonGroup w={252} pad={5} name="样式">
          <Big w={76} icon={<ConditionalIcon />} label="条件格式" />
          <Big w={76} icon={<TableStyleIcon />} label="套用" second="表格格式" />
          <Big w={86} icon={<CellStyleIcon />} label="单元格样式" />
        </RibbonGroup>

        <RibbonGroup w={182} name="单元格">
          <Big w={54} icon={<InsertIcon />} label="插入" />
          <Big w={54} icon={<DeleteIcon />} label="删除" />
          <Big w={54} icon={<FormatIcon />} label="格式" />
        </RibbonGroup>

        <RibbonGroup w={297} name="编辑">
          <SmallColumn $w={108}>
            <SmallButton $gap={6}><SumIcon />自动求和<Caret /></SmallButton>
            <SmallButton><FillDownIcon />填充<Caret /></SmallButton>
            <SmallButton><EraserIcon />清除<Caret /></SmallButton>
          </SmallColumn>
          <Big w={84} icon={<SortIcon />} label="排序和筛选" />
          <Big w={84} icon={<FindIcon />} label="查找和选择" />
        </RibbonGroup>
        <Collapse aria-label="折叠功能区"><svg width="12" height="8" viewBox="0 0 12 8"><path d="M1 7l5-5 5 5" fill="none" stroke="#666" strokeWidth="2" /></svg></Collapse>
      </Ribbon>

      <FormulaBar>
        <Box $w={127}><input aria-label="名称框" defaultValue="D2" /><BoxEnd aria-label="名称列表"><Caret /></BoxEnd></Box>
        <Grip $w={37}><i /><i /><i /></Grip>
        <Box $w={137}>
          <FxButton aria-label="取消"><svg width="15" height="13" viewBox="0 0 15 13"><path d="M1 0l13 13M14 0L1 13" stroke="#c0c0c0" strokeWidth="2" /></svg></FxButton>
          <FxButton aria-label="输入"><svg width="17" height="13" viewBox="0 0 17 13"><path d="M1 7l5 5L16 1" fill="none" stroke="#c0c0c0" strokeWidth="2.600" /></svg></FxButton>
          <FxButton aria-label="插入函数"><Fx>f<small>x</small></Fx></FxButton>
        </Box>
        <Grip $w={3} />
        <Box>
          <input aria-label="编辑栏" defaultValue="{=SUM((B2:B11>100)*B2:B11)}" />
          <FormulaEnd aria-label="展开编辑栏"><svg width="10" height="7" viewBox="0 0 10 7"><path d="M1 1l4 4 4-4" fill="none" stroke="#666" strokeWidth="2.400" /></svg></FormulaEnd>
        </Box>
      </FormulaBar>

      <Main>
        <SheetView>
          <Sheet>
            <colgroup><col width={33} />{widths.map((w, i) => <col key={i} width={w} />)}<col /></colgroup>
            <thead>
              <tr>
                <CornerCell aria-label="全选"><svg width="16" height="16" viewBox="0 0 16 16"><path d="M16 0v16H0z" fill="#b4b4b4" /></svg></CornerCell>
                {letters.map((l) => <ColumnHead key={l} scope="col" $on={l === "D"}>{l}</ColumnHead>)}
              </tr>
            </thead>
            <tbody>{Array.from({ length: 21 }, (_, i) => <SheetRow key={i} n={i + 1} />)}</tbody>
          </Sheet>
          <Picture>
            <PictureTable>
              <colgroup><col width={198} /><col /></colgroup>
              <thead><tr><th>产量大于100的合计</th><th>小于100或者大于110的合计</th></tr></thead>
              <tbody>
                <tr><td>690</td><td className="warn">929</td></tr>
                <tr><td /><td /></tr>
                <tr><td>690</td><td>929</td></tr>
              </tbody>
            </PictureTable>
          </Picture>
        </SheetView>
        <VScroll>
          <ScrollButton aria-label="向上滚动"><Arrow d="M0 7.500h10l-5-5z" /></ScrollButton>
          <VTrack><Thumb /></VTrack>
          <ScrollButton aria-label="向下滚动"><Arrow d="M0 2.500h10l-5 5z" /></ScrollButton>
        </VScroll>
      </Main>

      <SheetBar>
        <TabArrow $w={30} aria-label="上一个工作表"><Arrow d={LEFT} fill="#0b6b3a" /></TabArrow>
        <TabArrow $w={28} aria-label="下一个工作表"><Arrow d={RIGHT} fill="#0b6b3a" /></TabArrow>
        <TabArrow $w={29} aria-label="更多工作表"><Ellipsis /></TabArrow>
        <SheetTab $first>3判断身份证长度是否正确</SheetTab>
        <OrangeTab>4多条件求和</OrangeTab>
        <TabRule />
        <SheetTab>5判断男女退休否</SheetTab>
        <SheetTab>6数组<Latin $s={18}>SUMPRODUCT</Latin></SheetTab>
        <ActiveTab><ActiveFill>7产量大于<Latin $s={18}>100</Latin>的和</ActiveFill></ActiveTab>
        <SheetTab><Latin $s={18}>8SMALL</Latin></SheetTab>
        <SheetTab $last><Latin $s={18}>9</Latin></SheetTab>
        <TabArrow $w={28} aria-label="后面的工作表"><Ellipsis /></TabArrow>
        <TabArrow $w={28} aria-label="新工作表"><svg width="21" height="21" viewBox="0 0 21 21" fill="none" stroke="#777"><circle cx="10.500" cy="10.500" r="9.500" strokeWidth="1.300" /><path d="M10.500 5v11M5 10.500h11" strokeWidth="2" /></svg></TabArrow>
        <Grip $w={30}><i /><i /><i /></Grip>
        <HScroll>
          <ScrollButton aria-label="向左滚动"><Arrow d={LEFT} /></ScrollButton>
          <HTrack><Thumb /></HTrack>
          <ScrollButton aria-label="向右滚动"><Arrow d={RIGHT} /></ScrollButton>
        </HScroll>
      </SheetBar>

      <StatusBar>
        <span>滚动</span>
        <QuickButton $w={50} aria-label="录制宏"><svg width="16" height="16" viewBox="0 0 16 16"><path d="M1.500 2.500h13v12h-13z" fill="#fff" stroke="#666" /><path d="M8 1h7v4H8z" fill="#666" /><circle cx="3.500" cy="3.500" r="3.500" fill="#666" /><path d="M4 8.500h9M4 11.500h9" stroke="#666" strokeDasharray="2 1" /></svg></QuickButton>
        <ViewButtons>
          <ViewButton $on aria-label="普通"><svg width="17" height="17" viewBox="0 0 17 17" fill="none" stroke="#666"><path d="M.5.500h15v15H.5zM5.500.500v15M10.500.500v15M.5 5.500h15M.5 10.500h15" /></svg></ViewButton>
          <ViewButton aria-label="页面布局视图"><svg width="17" height="16" viewBox="0 0 17 16" fill="none" stroke="#666"><path d="M.5.500h16v14H.5zM4.500 2.500h8v10h-8zM6 5.500h5M6 7.500h5M6 9.500h5" /></svg></ViewButton>
          <ViewButton aria-label="分页预览"><svg width="17" height="16" viewBox="0 0 17 16" fill="none" stroke="#666"><path d="M.5.500h16v14H.5zM5.500.500v9M10.500.500v9M.5 9.500h10" /></svg></ViewButton>
        </ViewButtons>
        <QuickButton $w={12} aria-label="缩小"><svg width="10" height="10" viewBox="0 0 10 10"><path d="M0 5h10" stroke="#666" strokeWidth="2.400" /></svg></QuickButton>
        <ZoomSlider type="range" aria-label="显示比例" defaultValue={50} />
        <QuickButton $w={10} aria-label="放大"><svg width="10" height="10" viewBox="0 0 10 10"><path d="M0 5h10M5 0v10" stroke="#666" strokeWidth="2.400" /></svg></QuickButton>
        <Percent>100%</Percent>
      </StatusBar>
      <Taskbar><i /><i /><i /><i /><i /></Taskbar>

      <Watermark><strong>激活 Windows</strong>转到“设置”以激活 Windows。</Watermark>
      <Ink width="680" height="390" viewBox="0 0 680 390" fill="none" stroke="#f00" strokeWidth="2" strokeLinecap="round">
        {inkStrokes.map((pts, i) => <path key={i} d={stroke(pts)} />)}
      </Ink>
    </Window>
  );
}
